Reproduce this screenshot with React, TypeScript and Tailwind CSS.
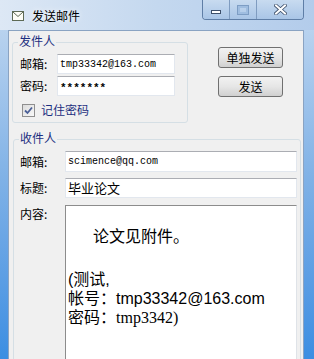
import React from 'react';

const cjk = "font-['Noto_Sans_CJK_SC',sans-serif]";
const mono = "font-['Liberation_Mono',monospace]";

const inputBox = 'bg-white border border-[#e2e7ee] border-t-[#abadb3] flex items-center';

export default function App() {
  return (
    <div className={`w-[314px] h-[359px] overflow-hidden flex flex-col bg-gradient-to-b from-[#c4d9f0] via-[#7fb1e6] to-[#3b8ee2] ${cjk}`}>
      {/* Title bar */}
      <div className="h-[30px] shrink-0 flex items-start bg-gradient-to-r from-[#dde8f5] via-[#c4d8ef] to-[#b3cceb]">
        <div className="flex items-center pl-[12px] pt-[9px] gap-[8px]">
          <svg width="12" height="10" viewBox="0 0 12 10">
            <rect x="0.5" y="0.5" width="11" height="9" fill="#fdfdf6" stroke="#5d6a55" />
            <path d="M1 1 L6 5.5 L11 1" fill="none" stroke="#5d6a55" strokeWidth="1" />
          </svg>
          <span className="text-[12px] leading-[14px] text-black [text-shadow:0_0_6px_#ffffff]">发送邮件</span>
        </div>
        <div className="ml-auto mr-[10px] flex h-[20px] border border-t-0 border-[#5f7ea6] rounded-b-[4px] overflow-hidden">
          <div className="w-[27px] flex items-center justify-center border-r border-[#7f9cc0] bg-gradient-to-b from-[#c8dbf0] to-[#a9c5e6]">
            <div className="w-[10px] h-[4px] mt-[5px] bg-white border border-[#3d4f6a]" />
          </div>
          <div className="w-[27px] flex items-center justify-center border-r border-[#7f9cc0] bg-gradient-to-b from-[#c8dbf0] to-[#a9c5e6]">
            <div className="w-[10px] h-[8px] border-2 border-[#9fbde0] outline outline-1 outline-[#7d9dc4]" />
          </div>
          <div className="w-[46px] flex items-center justify-center bg-gradient-to-b from-[#c8dbf0] to-[#a9c5e6]">
            <svg width="13" height="11" viewBox="0 0 13 11">
              <path d="M2 1.5 L11 9.5 M11 1.5 L2 9.5" stroke="#3d4f6a" strokeWidth="3.6" strokeLinecap="square" />
              <path d="M2 1.5 L11 9.5 M11 1.5 L2 9.5" stroke="#ffffff" strokeWidth="2" strokeLinecap="square" />
            </svg>
          </div>
        </div>
      </div>

      {/* Client area */}
      <div className="flex-1 ml-[8px] mr-[10px] bg-[#f0f0f0] border border-b-0 border-[#8aa3c2] flex flex-col">
        {/* Top row: sender group + buttons */}
        <div className="flex items-start">
          <div className="ml-[3px] mt-[11px] w-[176px] h-[81px] border border-[#d5dfe5] rounded-[3px] flex flex-col">
            <div className="-mt-[10px] ml-[5px] w-fit px-[1px] bg-[#f0f0f0] text-[12px] leading-[16px] text-[#1d2f80]">发件人</div>
            <div className="mt-[5px] flex items-center">
              <span className="w-[44px] pl-[7px] text-[12px] leading-[20px] text-black">邮箱:</span>
              <div className={`w-[118px] h-[20px] ${inputBox}`}>
                <span className={`pl-[2px] text-[10px] ${mono} text-black`}>tmp33342@163.com</span>
              </div>
            </div>
            <div className="mt-[2px] flex items-center">
              <span className="w-[44px] pl-[7px] text-[12px] leading-[20px] text-black">密码:</span>
              <div className={`w-[118px] h-[20px] ${inputBox}`}>
                <span className={`pl-[2px] text-[11px] font-bold ${mono} text-black leading-[20px] pt-[3px]`}>*******</span>
              </div>
            </div>
            <div className="mt-[7px] ml-[9px] flex items-center gap-[6px]">
              <div className="w-[13px] h-[13px] border border-[#8f8f8f] bg-gradient-to-br from-[#dcdcdc] to-[#f8f8f8] flex items-center justify-center">
                <svg width="9" height="9" viewBox="0 0 9 9">
                  <path d="M1 4.5 L3.5 7 L8 1.5" fill="none" stroke="#4a5f97" strokeWidth="1.8" />
                </svg>
              </div>
              <span className="text-[12px] leading-[14px] text-[#1d2f80]">记住密码</span>
            </div>
          </div>
          <div className="ml-[30px] mt-[16px] flex flex-col gap-[8px]">
            <button className="w-[65px] h-[21px] rounded-[3px] border border-[#707070] bg-gradient-to-b from-[#f2f2f2] via-[#e6e6e6] to-[#d0d0d0] text-[12px] leading-[19px] text-black">单独发送</button>
            <button className="w-[65px] h-[21px] rounded-[3px] border border-[#707070] bg-gradient-to-b from-[#f2f2f2] via-[#e6e6e6] to-[#d0d0d0] text-[12px] leading-[19px] text-black">发送</button>
          </div>
        </div>

        {/* Receiver group */}
        <div className="ml-[4px] mt-[16px] w-[288px] h-[240px] border border-[#d5dfe5] rounded-[3px] flex flex-col">
          <div className="-mt-[10px] ml-[5px] w-fit px-[1px] bg-[#f0f0f0] text-[12px] leading-[16px] text-[#1d2f80]">收件人</div>
          <div className="mt-[5px] flex items-center">
            <span className="w-[51px] pl-[6px] text-[12px] leading-[21px] text-black">邮箱:</span>
            <div className={`w-[232px] h-[21px] ${inputBox}`}>
              <span className={`pl-[2px] text-[10px] ${mono} text-black`}>scimence@qq.com</span>
            </div>
          </div>
          <div className="mt-[6px] flex items-center">
            <span className="w-[51px] pl-[6px] text-[12px] leading-[20px] text-black">标题:</span>
            <div className={`w-[232px] h-[20px] ${inputBox}`}>
              <span className="pl-[2px] text-[13px] text-black">毕业论文</span>
            </div>
          </div>
          <div className="mt-[7px] flex items-start">
            <span className="w-[51px] pl-[6px] mt-[2px] text-[12px] leading-[14px] text-black">内容:</span>
            <div className="w-[232px] h-[200px] bg-white border border-[#dfe3e8] border-t-[#8c8c8c] border-l-[#8c8c8c] flex flex-col pl-[2px] text-[16px] leading-[19px] text-black font-['Liberation_Sans','Noto_Sans_CJK_SC',sans-serif]">
              <div className="mt-[21px] pl-[25px]">论文见附件。</div>
              <div className="mt-[24px]">(测试,</div>
              <div>帐号：tmp33342@163.com</div>
              <div>密码：<span className="font-['Liberation_Serif',serif]">tmp3342)</span></div>
            </div>
          </div>
        </div>
      </div>
    </div>
  );
}
